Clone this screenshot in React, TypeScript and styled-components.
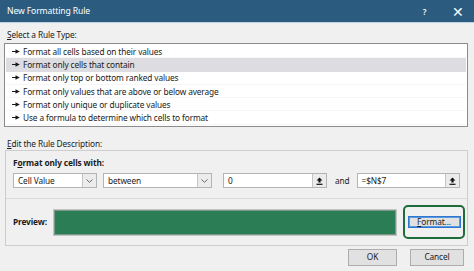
import styled, { createGlobalStyle } from 'styled-components';

const GlobalStyle = createGlobalStyle`
  html, body {
    margin: 0;
    padding: 0;
    background: #f0f0f0;
  }
  body {
    font-family: "Noto Sans", "Open Sans", Arial, sans-serif;
  }
`;

const Dialog = styled.div`
  width: 474px;
  height: 271px;
  background: #f0f0f0;
  display: flex;
  flex-direction: column;
  overflow: hidden;
  font-size: 8.3px;
  letter-spacing: -0.12px;
  color: #1b1b1b;
`;

const TitleBar = styled.div`
  flex: none;
  height: 22px;
  display: flex;
  align-items: center;
  padding-left: 7px;
  background: #2b5c7f;
  border-bottom: 1px solid #b9d2e4;
  color: #fff;
  font-size: 8.6px;
`;

const Title = styled.span`
  flex: 1;
`;

const TitleButton = styled.span<{ $big?: boolean }>`
  width: 33px;
  text-align: center;
  font-size: ${(p) => (p.$big ? '14px' : '8px')};
  font-weight: ${(p) => (p.$big ? 300 : 600)};
`;

const Body = styled.div`
  display: flex;
  flex-direction: column;
  padding: 0 6px 0 4px;
`;

const SectionLabel = styled.div<{ $top: number; $bottom: number }>`
  height: 10px;
  line-height: 10px;
  padding-left: 3px;
  margin-top: ${(p) => p.$top}px;
  margin-bottom: ${(p) => p.$bottom}px;
`;

const Accel = styled.span`
  text-decoration: underline;
  text-underline-offset: 1px;
`;

const RuleList = styled.ul`
  list-style: none;
  margin: 0;
  padding: 1px 1px 0;
  height: 81px;
  background: #fff;
  border: 1px solid #8c8c8c;
`;

const Rule = styled.li<{ $selected?: boolean }>`
  height: 13.3px;
  display: flex;
  align-items: center;
  gap: 3px;
  padding-left: 6px;
  background: ${(p) => (p.$selected ? '#dcdce1' : 'transparent')};
  border-bottom: 1px solid ${(p) => (p.$selected ? '#dcdce1' : '#f6f6f6')};
  box-sizing: border-box;
`;

const DescBox = styled.div`
  margin-left: 1px;
  height: 96px;
  box-sizing: border-box;
  border: 1px solid #cdcdcd;
  display: flex;
  flex-direction: column;
`;

const ConditionPart = styled.div`
  height: 48px;
  padding: 7px 0 0 7px;
  box-sizing: border-box;
  border-bottom: 1px solid #d9d9d9;
`;

const BoldLabel = styled.div`
  font-weight: 700;
  height: 10px;
  line-height: 10px;
`;

const Controls = styled.div`
  display: flex;
  align-items: center;
  margin-top: 5px;
  height: 15px;
`;

const Field = styled.div<{ $w: number; $ml?: number }>`
  width: ${(p) => p.$w}px;
  margin-left: ${(p) => p.$ml ?? 0}px;
  height: 15px;
  box-sizing: border-box;
  border: 1px solid #b4b4b4;
  background: #fff;
  display: flex;
  align-items: center;
`;

const FieldText = styled.span`
  flex: 1;
  padding-left: 4px;
  white-space: nowrap;
`;

const FieldButton = styled.span`
  width: 14px;
  height: 13px;
  box-sizing: border-box;
  border-left: 1px solid #c4c4c4;
  background: #ececec;
  display: flex;
  align-items: center;
  justify-content: center;
`;

const AndLabel = styled.span`
  margin: 0 7px 0 8px;
`;

const PreviewPart = styled.div`
  flex: 1;
  display: flex;
  align-items: center;
  padding-left: 7px;
`;

const PreviewLabel = styled(BoldLabel)`
  width: 40px;
`;

const Swatch = styled.div`
  width: 344px;
  height: 27px;
  box-sizing: border-box;
  background: #2b7d55;
  border: 1px solid #c3c3c3;
  outline: 1px solid #7a9a88;
  outline-offset: -2px;
`;

const Highlight = styled.div`
  margin-left: 6px;
  width: 62px;
  height: 34px;
  box-sizing: border-box;
  border: 2px solid #1f6c3b;
  border-radius: 5px;
  display: flex;
  align-items: center;
  justify-content: center;
`;

const Button = styled.button<{ $w: number; $focus?: boolean }>`
  width: ${(p) => p.$w}px;
  height: ${(p) => (p.$focus ? 12 : 17)}px;
  padding: 0;
  font: inherit;
  letter-spacing: inherit;
  color: #1b1b1b;
  background: #e1e1e1;
  border: 1px solid ${(p) => (p.$focus ? '#2f76cf' : '#adadad')};
  box-shadow: ${(p) => (p.$focus ? 'inset 0 0 0 1px #5a9ae0' : 'none')};
  line-height: 1;
`;

const Footer = styled.div`
  display: flex;
  justify-content: flex-end;
  gap: 13px;
  padding: 3px 10px 0 0;
`;

const Bullet = () => (
  <svg width="8" height="5" viewBox="0 0 8 5">
    <path d="M0 2.5h4" stroke="#1b1b1b" strokeWidth="1" />
    <path d="M3.5 0.3L7.8 2.5 3.5 4.7z" fill="#1b1b1b" />
  </svg>
);

const Chevron = () => (
  <svg width="7" height="4" viewBox="0 0 7 4">
    <path d="M0.5 0.5L3.5 3.3 6.5 0.5" fill="none" stroke="#6a6a6a" strokeWidth="1" />
  </svg>
);

const RefIcon = () => (
  <svg width="7" height="8" viewBox="0 0 7 8">
    <path d="M3.5 0.5L6.5 3.5H4.6V5.5H2.4V3.5H0.5z" fill="#111" />
    <path d="M0.5 7.3h6" stroke="#111" strokeWidth="1.2" />
  </svg>
);

const rules = [
  'Format all cells based on their values',
  'Format only cells that contain',
  'Format only top or bottom ranked values',
  'Format only values that are above or below average',
  'Format only unique or duplicate values',
  'Use a formula to determine which cells to format',
];

export default function App() {
  return (
    <>
      <GlobalStyle />
      <Dialog>
        <TitleBar>
          <Title>New Formatting Rule</Title>
          <TitleButton>?</TitleButton>
          <TitleButton $big>✕</TitleButton>
        </TitleBar>
        <Body>
          <SectionLabel $top={7} $bottom={3}>
            <Accel>S</Accel>elect a Rule Type:
          </SectionLabel>
          <RuleList>
            {rules.map((r, i) => (
              <Rule key={r} $selected={i === 1}>
                <Bullet />
                {r}
              </Rule>
            ))}
          </RuleList>
          <SectionLabel $top={12} $bottom={1}>
            <Accel>E</Accel>dit the Rule Description:
          </SectionLabel>
          <DescBox>
            <ConditionPart>
              <BoldLabel>
                F<Accel>o</Accel>rmat only cells with:
              </BoldLabel>
              <Controls>
                <Field $w={84}>
                  <FieldText>Cell Value</FieldText>
                  <FieldButton>
                    <Chevron />
                  </FieldButton>
                </Field>
                <Field $w={109} $ml={6}>
                  <FieldText>between</FieldText>
                  <FieldButton>
                    <Chevron />
                  </FieldButton>
                </Field>
                <Field $w={104} $ml={11}>
                  <FieldText>0</FieldText>
                  <FieldButton>
                    <RefIcon />
                  </FieldButton>
                </Field>
                <AndLabel>and</AndLabel>
                <Field $w={103}>
                  <FieldText>=$N$7</FieldText>
                  <FieldButton>
                    <RefIcon />
                  </FieldButton>
                </Field>
              </Controls>
            </ConditionPart>
            <PreviewPart>
              <PreviewLabel>Preview:</PreviewLabel>
              <Swatch />
              <Highlight>
                <Button $w={53} $focus>
                  <Accel>F</Accel>ormat...
                </Button>
              </Highlight>
            </PreviewPart>
          </DescBox>
        </Body>
        <Footer>
          <Button $w={49}>OK</Button>
          <Button $w={54}>Cancel</Button>
        </Footer>
      </Dialog>
    </>
  );
}
